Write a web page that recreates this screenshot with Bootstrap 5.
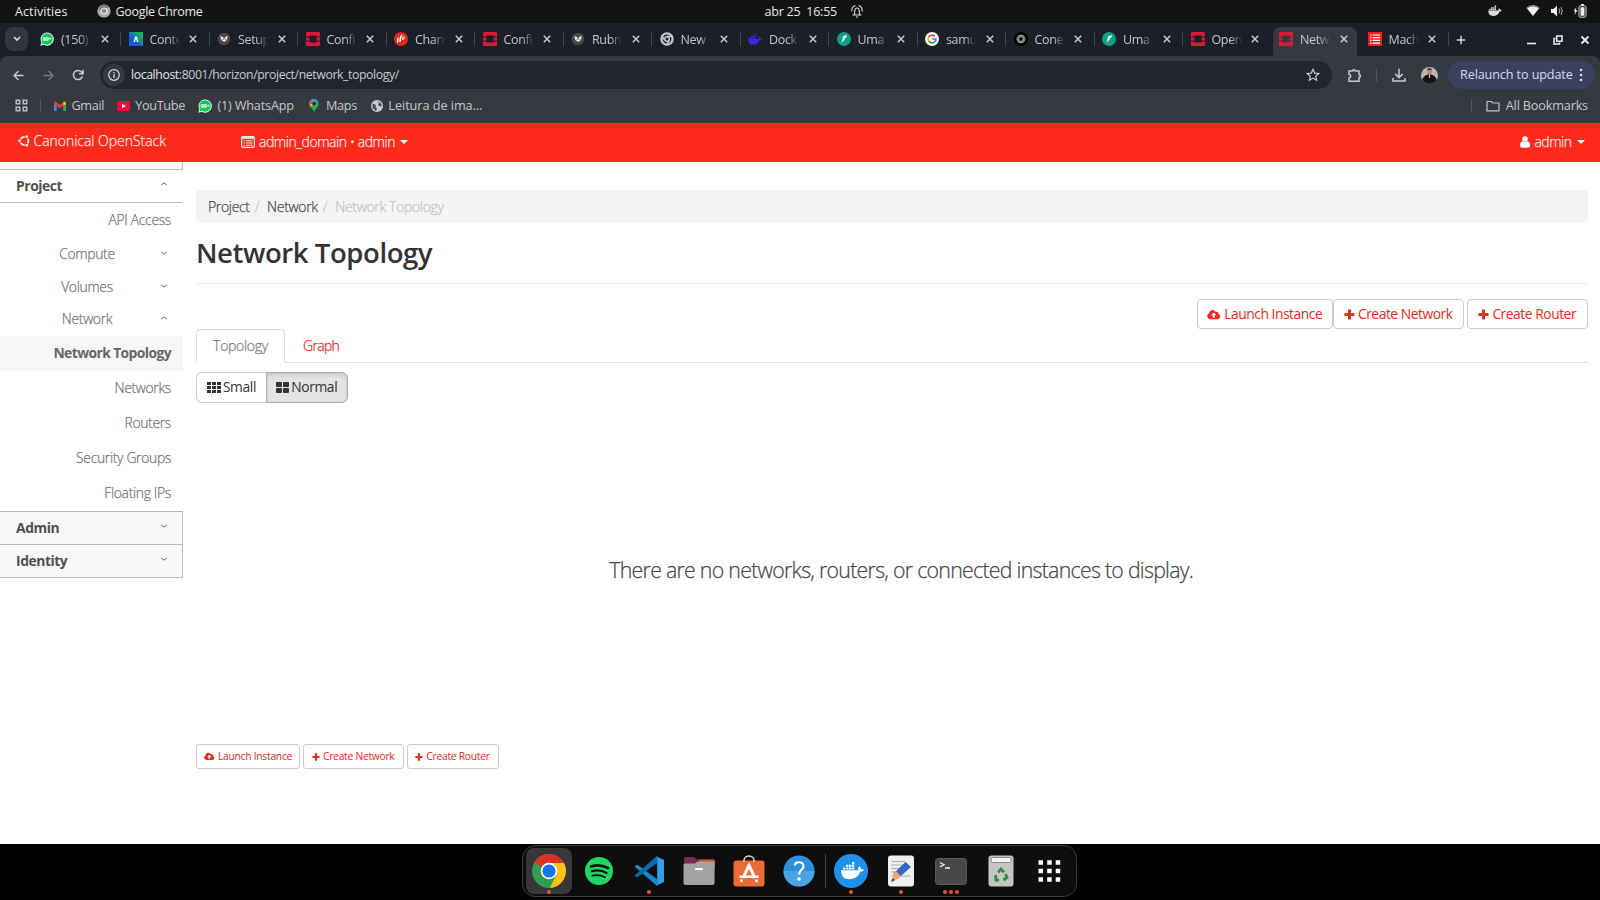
<!DOCTYPE html>
<html lang="en">
<head>
<meta charset="utf-8">
<title>Network Topology - Canonical OpenStack</title>
<link href="https://cdn.jsdelivr.net/npm/bootstrap@5.3.0/dist/css/bootstrap.min.css" rel="stylesheet">
<style>
body{width:1600px;height:900px;overflow:hidden;background:#fff;font-family:"Open Sans","Noto Sans",sans-serif;font-size:13px;line-height:1.2;color:#333}
svg{display:block;flex:none}
/* desktop top bar */
.topbar{height:23px;background:#131313;color:#e6e6e6;font-size:12.5px;letter-spacing:-.25px;padding-bottom:1px}
.topbar>div{flex:1 1 0}
/* browser */
.tabstrip{height:33px;background:#1b1f27;padding-left:5px;color:#c3c6cf}
.tabsearch{width:23px;height:24px;margin-top:4px;border-radius:8px;background:#33363e;margin-right:3.5px;flex:none}
.btab{width:88.5px;flex:none;height:29px;margin-top:4px;padding:0 10.5px 5px 8.5px;position:relative;font-size:12.5px;letter-spacing:-.35px}
.btab .lbl{width:35px;margin-left:7px;white-space:nowrap;-webkit-mask-image:linear-gradient(90deg,#000 52%,transparent 86%);mask-image:linear-gradient(90deg,#000 52%,transparent 86%)}
.btab:not(.on):not(.pre)::after{content:"";position:absolute;right:-1px;top:5px;width:1px;height:14px;background:#42454e}
.btab.on{z-index:1}
.btab.on::before{content:"";position:absolute;z-index:-1;left:2px;right:2px;top:0;bottom:0;background:#373941;border-radius:8px 8px 0 0}
.toolbar{height:38px;background:#373941;color:#c7c9d1;padding-top:5px;border-radius:8px 8px 0 0}
.behind{background:#1b1f27}
.omni{width:1232px;height:28px;border-radius:14px;background:#22252d;margin-left:16px;padding-left:3px;padding-right:12px;font-size:12.3px;letter-spacing:-.41px}
.info{width:22px;height:22px;border-radius:50%;background:#373941;margin-right:6px}
.relaunch{width:147px;height:28px;border-radius:14px;background:#3a4260;color:#d6daf0;font-size:12.6px;padding-left:12px;padding-right:12px;letter-spacing:-.1px}
.bookmarks{height:29px;background:#373941;color:#c3c5cb;font-size:12.7px;padding:0 12px 6px 15px;letter-spacing:-.18px}
.vline{width:1px;height:13px;background:#55575f}
/* horizon: the light face is thickened a little */
.hz-top,.leaf:not(.cur),.grp,.crumbs,.ptabs,.empty-msg{-webkit-text-stroke:.25px currentColor}
.hz-top{height:38.5px;background:#fe2a1b;color:#ffe4e1;font-weight:300;font-size:14px;letter-spacing:-.03px}
.caret{width:0;height:0;border:4px solid transparent;border-top-color:#fff;border-bottom:0}
.side{width:183px;font-size:13.9px;color:#777;font-weight:300;letter-spacing:-.32px}
.side .panelrow{height:33.3px;background:#f8f8f8;border-bottom:1px solid #b9b9b9;border-right:1px solid #b9b9b9;padding:0 14px 0 16px;font-weight:700;color:#505050;letter-spacing:-.45px}
.side .panelrow.open{background:#fff;border-right-color:#fff;padding-top:1px}
.side .stub{height:8px;background:#f8f8f8;border-bottom:1px solid #b9b9b9;border-right:1px solid #b9b9b9}
.side .leaf{height:35px;padding-right:12px;padding-top:1px}
.side .leaf.cur{background:#f6f6f6;font-weight:700;color:#666;letter-spacing:-.6px}
.side .grp{padding:0 15px 0 14px}
.side .grp span{flex:1;text-align:center}
.main{padding:28.5px 12.5px 0 13px}
.crumbs{height:33px;background:#f4f4f4;border-radius:4px;padding-left:12px;padding-top:1px;font-size:14px;font-weight:300;letter-spacing:-.34px;color:#c4c4c4}
.title{font-size:27.5px;font-weight:600;color:#333;letter-spacing:-.42px;height:61px;padding-bottom:2px;border-bottom:1px solid #ececec;margin:0}
.hb{height:30px;border:1px solid #ccc;border-radius:4px;background:#fff;color:#ec2a20;font-size:13.8px;padding:0;display:flex;align-items:center;justify-content:center;gap:3px;letter-spacing:-.45px;line-height:1}
.sb{height:25px;font-size:10.3px;border-radius:3px;letter-spacing:-.27px}
.ptabs{height:34px;border-bottom:1px solid #ddd;font-weight:300;font-size:14px;letter-spacing:-.3px}
.ptabs .one{width:89px;height:34px;border:1px solid #ddd;border-bottom-color:#fff;border-radius:4px 4px 0 0;background:#fff;color:#808080;padding-top:1px}
.tog{height:30.5px;border:1px solid #ccc;color:#333;font-size:13.8px;gap:2px;letter-spacing:-.35px}
.empty-msg{font-size:21.3px;font-weight:300;color:#484848;letter-spacing:-.72px;height:341.5px;padding-bottom:6px;padding-left:19px}
/* dock */
.dockbar{height:56px;background:#000}
.dock{width:555px;height:52px;margin-top:1px;margin-right:1px;border:1px solid #3a3a3a;border-radius:13px;background:#0e0e0e;padding-left:3px}
.di{width:50px;height:50px;position:relative;flex:none}
.di.act::before{content:"";position:absolute;left:0;top:2px;width:46px;height:46px;border-radius:8px;background:#373737}
.di svg{position:relative}
.dots{position:absolute;left:0;width:46px;top:44px;display:flex;justify-content:center;gap:2px}
.dots i{width:4px;height:4px;border-radius:50%;background:#e0592a}
.dsep{width:1px;height:34px;background:#444;margin-left:-1px;margin-right:2px;flex:none}
</style>
</head>
<body class="d-flex flex-column">
<svg width="0" height="0" class="position-absolute">
<defs>
<symbol id="x" viewBox="0 0 10 10"><path d="M1.8 1.8l6.4 6.4M8.2 1.8L1.8 8.2" stroke="#c8cad0" stroke-width="1.5" fill="none"/></symbol>
<symbol id="wa" viewBox="0 0 14 14"><path d="M.3 13.7l1-3.7A6.6 6.6 0 1 1 4 12.8z" fill="#e9fff1"/><path d="M1.4 12.6l.8-2.8a5.7 5.7 0 1 1 2 2z" fill="#12c755"/><text x="7" y="9.3" font-size="5.8" font-weight="700" fill="#fff" text-anchor="middle" letter-spacing="-.3">99+</text></symbol>
<symbol id="os" viewBox="0 0 14 14"><path fill="#e1173a" fill-rule="evenodd" d="M1 0h12a1 1 0 0 1 1 1v3.6h-3.4V3.5H3.4v1.1H0V1a1 1 0 0 1 1-1zM0 5.4h3.4v3.2H0zM10.6 5.4H14v3.2h-3.4zM0 9.4h3.4v1.1h7.2V9.4H14V13a1 1 0 0 1-1 1H1a1 1 0 0 1-1-1z"/></symbol>
<symbol id="juju" viewBox="0 0 14 14"><circle cx="7" cy="7" r="6.3" fill="#4a4744"/><path d="M3.2 4l3 1.200.9 2.800 1-3 2.700-1-1 4-2.500 2-2.900-2z" fill="#eee"/><path d="M5.500 7.500h1M8.200 7.200h1" stroke="#444" stroke-width=".8"/></symbol>
<symbol id="um" viewBox="0 0 14 14"><circle cx="7" cy="7" r="7" fill="#109e86"/><path d="M9.9 3L6.2 4.200 4.400 11 6.500 8.600 8.600 7.500H7.200l.4-1.400 1.700-.7z" fill="#fff"/></symbol>
<symbol id="whale" viewBox="0 0 16 14"><path d="M0 6.5h12c-.2-1.2.1-2.1.8-2.8.8.5 1.100 1.200 1.100 2 .7-.1 1.400 0 2 .4-.5 1-1.400 1.500-2.600 1.500C12.200 11 9.500 12.800 6 12.800 2 12.800 0 10.500 0 6.500z"/><path d="M1.300 4.500h1.700v1.500H1.300zM3.400 4.500h1.700v1.500H3.400zM5.500 4.500h1.700v1.500H5.500zM7.600 4.500h1.700v1.500H7.600zM3.400 2.600h1.700v1.500H3.400zM5.500 2.600h1.700v1.500H5.500zM7.600 2.600h1.700v1.500H7.600zM7.600.7h1.700v1.500H7.600z"/></symbol>
<symbol id="cg" viewBox="0 0 14 14"><circle cx="7" cy="7" r="5.600" fill="none" stroke="currentColor" stroke-width="2.300"/><circle cx="7" cy="7" r="2.300" fill="none" stroke="currentColor" stroke-width="1.500"/><path d="M7 4.200h6M4.600 8.400L1.600 3.400M9.400 8.400l-3 5" stroke="currentColor" stroke-width="1.600"/></symbol>
<symbol id="plus" viewBox="0 0 11 11"><path d="M4 .5h3V4h3.500v3H7v3.500H4V7H.5V4H4z" fill="currentColor"/></symbol>
<symbol id="cloud" viewBox="0 0 15 11"><path fill="currentColor" fill-rule="evenodd" d="M3.300 10.500A3.200 3.200 0 0 1 2 4.500 4 4 0 0 1 9.500 2.800a2.200 2.200 0 0 1 3 2.200 2.900 2.900 0 0 1-.8 5.500zM7.200 3.400L4.300 6.400h1.900v2.600h2V6.400h1.900z"/></symbol>
<symbol id="dn" viewBox="0 0 8 8"><path d="M1.200 3l2.800 2.200L6.800 3" fill="none" stroke="#666" stroke-width="1"/></symbol>
<symbol id="up" viewBox="0 0 8 8"><path d="M1.200 5L4 2.800 6.800 5" fill="none" stroke="#666" stroke-width="1"/></symbol>
</defs>
</svg>

<div class="topbar d-flex align-items-center">
  <div class="d-flex align-items-center" style="padding-left:15px"><span style="letter-spacing:.1px">Activities</span>
    <svg width="14" height="14" viewBox="0 0 14 14" style="margin-left:29px;margin-right:5px"><circle cx="7" cy="7" r="6.600" fill="#aaa"/><path d="M7 .4a6.600 6.600 0 0 1 6 3.600H7L4 8 1.200 4A6.600 6.600 0 0 1 7 .4z" fill="#777"/><circle cx="7" cy="7" r="3" fill="#888" stroke="#eee" stroke-width="1.200"/></svg><span style="letter-spacing:-.32px">Google Chrome</span></div>
  <div class="d-flex align-items-center justify-content-center" style="padding-left:27px"><span>abr 25&nbsp; 16:55</span>
    <svg width="14" height="15" style="margin-left:13.500px" viewBox="0 0 14 15" fill="none" stroke="#ddd" stroke-width="1.100"><path d="M4 11c.8-1 .8-2 .8-4 0-4 4.400-4 4.400 0 0 2 0 3 .8 4zM2.500 11h9M1.800 7.500C1.500 4 3.500 2 5.500 1.500M12.200 7.500C12.500 4 10.500 2 8.500 1.500M6 13h2"/></svg></div>
  <div class="d-flex align-items-center justify-content-end" style="padding-right:13px">
    <svg width="14" height="12" viewBox="0 0 16 14" fill="#ddd"><use href="#whale"/></svg>
    <svg style="margin-left:24px" width="14" height="12" viewBox="0 0 14 12"><path d="M1 3.500a9 9 0 0 1 12 0L7 11z" fill="#eee"/><path d="M.5 3A10 10 0 0 1 13.500 3" stroke="#aaa" fill="none"/></svg>
    <svg style="margin-left:10px" width="14" height="12" viewBox="0 0 14 12"><path d="M1 4h2.500L7 .5v11L3.500 8H1z" fill="#eee"/><path d="M9 3.500q1.500 2.500 0 5M11 2q2.500 4 0 8" stroke="#aaa" fill="none"/></svg>
    <svg style="margin-left:9px" width="14" height="14" viewBox="0 0 14 14"><path d="M3.500 3L.5 7.300h1.800L1.500 11l3-4.700H2.800z" fill="#eee"/><rect x="6" y="1.800" width="7" height="11.400" rx="1.500" fill="none" stroke="#ddd"/><path d="M7.500 3.300h4v8.400h-4zM8 0h3v1.500H8z" fill="#eee"/></svg>
  </div>
</div>

<div class="tabstrip d-flex">
  <div class="tabsearch d-flex align-items-center justify-content-center"><svg width="8" height="6" viewBox="0 0 8 6"><path d="M1 1l3 3 3-3" stroke="#ddd" stroke-width="1.600" fill="none"/></svg></div>
  <div class="btab d-flex align-items-center"><svg width="14" height="14"><use href="#wa"/></svg><span class="lbl">(150)</span><svg class="ms-auto" width="10" height="10"><use href="#x"/></svg></div>
  <div class="btab d-flex align-items-center"><svg width="14" height="14" viewBox="0 0 14 14"><defs><linearGradient id="gc" x1="0" y1="1" x2="1" y2="0"><stop offset=".35" stop-color="#1559d8"/><stop offset=".8" stop-color="#17b25c"/></linearGradient></defs><path fill="url(#gc)" d="M0 0h14v14H0z"/><path d="M4.500 10L6.300 4.500h1.600L9.600 10H8L7 6.500 6 10z" fill="#fff"/></svg><span class="lbl">Conte</span><svg class="ms-auto" width="10" height="10"><use href="#x"/></svg></div>
  <div class="btab d-flex align-items-center"><svg width="14" height="14"><use href="#juju"/></svg><span class="lbl">Setup</span><svg class="ms-auto" width="10" height="10"><use href="#x"/></svg></div>
  <div class="btab d-flex align-items-center"><svg width="14" height="14"><use href="#os"/></svg><span class="lbl">Confi</span><svg class="ms-auto" width="10" height="10"><use href="#x"/></svg></div>
  <div class="btab d-flex align-items-center"><svg width="14" height="14" viewBox="0 0 14 14"><circle cx="7" cy="7" r="7" fill="#e8261c"/><path d="M3.500 11V6.500q1.500-2 1.500 0V9q1.500 1.500 1.500 0V4q1.300-2 1.500 0v3q1.500 1.200 2 0V4" stroke="#fff" fill="none" stroke-width="1"/></svg><span class="lbl">Charr</span><svg class="ms-auto" width="10" height="10"><use href="#x"/></svg></div>
  <div class="btab d-flex align-items-center"><svg width="14" height="14"><use href="#os"/></svg><span class="lbl">Confi</span><svg class="ms-auto" width="10" height="10"><use href="#x"/></svg></div>
  <div class="btab d-flex align-items-center"><svg width="14" height="14"><use href="#juju"/></svg><span class="lbl">Rubri</span><svg class="ms-auto" width="10" height="10"><use href="#x"/></svg></div>
  <div class="btab d-flex align-items-center"><svg width="14" height="14"><use href="#cg"/></svg><span class="lbl">New</span><svg class="ms-auto" width="10" height="10"><use href="#x"/></svg></div>
  <div class="btab d-flex align-items-center"><svg width="14" height="13" fill="#3a25e6"><use href="#whale"/></svg><span class="lbl">Dock</span><svg class="ms-auto" width="10" height="10"><use href="#x"/></svg></div>
  <div class="btab d-flex align-items-center"><svg width="14" height="14"><use href="#um"/></svg><span class="lbl">Uma</span><svg class="ms-auto" width="10" height="10"><use href="#x"/></svg></div>
  <div class="btab d-flex align-items-center"><svg width="14" height="14" viewBox="0 0 14 14"><circle cx="7" cy="7" r="7" fill="#fff"/><g fill="none" stroke-width="1.700"><path d="M9.700 4.300A3.900 3.900 0 0 0 3.700 5" stroke="#e94335"/><path d="M3.700 5a3.900 3.900 0 0 0 0 4" stroke="#fabb05"/><path d="M3.700 9a3.900 3.900 0 0 0 6 .8" stroke="#34a853"/><path d="M9.700 9.800A3.900 3.900 0 0 0 10.900 7H7" stroke="#4285f4"/></g></svg><span class="lbl">samu</span><svg class="ms-auto" width="10" height="10"><use href="#x"/></svg></div>
  <div class="btab d-flex align-items-center"><svg width="14" height="14" viewBox="0 0 14 14"><circle cx="7" cy="7" r="7" fill="#000"/><g fill="none" stroke="#bbb" stroke-width=".8"><ellipse cx="7" cy="7" rx="4.200" ry="2.300"/><ellipse cx="7" cy="7" rx="4.200" ry="2.300" transform="rotate(60 7 7)"/><ellipse cx="7" cy="7" rx="4.200" ry="2.300" transform="rotate(120 7 7)"/></g></svg><span class="lbl">Cone</span><svg class="ms-auto" width="10" height="10"><use href="#x"/></svg></div>
  <div class="btab d-flex align-items-center"><svg width="14" height="14"><use href="#um"/></svg><span class="lbl">Uma</span><svg class="ms-auto" width="10" height="10"><use href="#x"/></svg></div>
  <div class="btab pre d-flex align-items-center"><svg width="14" height="14"><use href="#os"/></svg><span class="lbl">Open</span><svg class="ms-auto" width="10" height="10"><use href="#x"/></svg></div>
  <div class="btab on d-flex align-items-center"><svg width="14" height="14"><use href="#os"/></svg><span class="lbl">Netw</span><svg class="ms-auto" width="10" height="10"><use href="#x"/></svg></div>
  <div class="btab d-flex align-items-center"><svg width="14" height="14" viewBox="0 0 14 14"><path fill="#e2261d" d="M0 0h14v14H0z"/><path d="M2 3h1.500M4.500 3H12M2 5.700h1.500M4.500 5.700H12M2 8.400h1.500M4.500 8.400H12M2 11.100h1.500M4.500 11.100H12" stroke="#fff" stroke-width="1.200"/></svg><span class="lbl">Mach</span><svg class="ms-auto" width="10" height="10"><use href="#x"/></svg></div>
  <div class="d-flex align-items-center flex-grow-1" style="padding:0 10px 0 8.500px">
    <svg width="10" height="10" viewBox="0 0 10 10"><path d="M5 .8v8.400M.8 5h8.400" stroke="#d0d2d8" stroke-width="1.500"/></svg>
    <svg class="ms-auto" width="9" height="10" viewBox="0 0 9 10"><path d="M0 8.500h9" stroke="#eee" stroke-width="1.600"/></svg>
    <svg style="margin-left:17px" width="10" height="10" viewBox="0 0 10 10"><path d="M3.700 1h5.300v5.300H3.700zM2.500 3.500H1V9h5.500V7.500" fill="none" stroke="#eee" stroke-width="1.500"/></svg>
    <svg style="margin-left:17px" width="10" height="10" viewBox="0 0 10 10"><path d="M1.500 1.500l7 7M8.500 1.500l-7 7" stroke="#eee" stroke-width="1.800"/></svg>
  </div>
</div>

<div class="behind"><div class="toolbar d-flex">
  <div class="d-flex align-items-center" style="height:28px;padding-left:13px">
    <svg width="11" height="11" viewBox="0 0 11 11" fill="none" stroke="#c7c9d1" stroke-width="1.400"><path d="M10.500 5.500H1M5.500 1L1 5.500 5.500 10"/></svg>
    <svg style="margin-left:19px" width="11" height="11" viewBox="0 0 11 11" fill="none" stroke="#777a82" stroke-width="1.400"><path d="M.5 5.500H10M5.500 1L10 5.500 5.500 10"/></svg>
    <svg style="margin-left:18px" width="12" height="12" viewBox="0 0 12 12" fill="none" stroke="#c7c9d1" stroke-width="1.500"><path d="M10.400 7.300A4.600 4.600 0 1 1 9.500 3L11 4.500"/><path d="M11 .8v3.900H7"/></svg>
  </div>
  <div class="omni d-flex align-items-center"><span class="info d-flex align-items-center justify-content-center"><svg width="12" height="12" viewBox="0 0 12 12"><circle cx="6" cy="6" r="5.300" fill="none" stroke="#d5d7dd" stroke-width="1.200"/><path d="M6 5.300V9M6 3v1.300" stroke="#d5d7dd" stroke-width="1.300"/></svg></span><span><span style="color:#e3e4e8">localhost</span>:8001/horizon/project/network_topology/</span>
    <svg class="ms-auto" width="14" height="14" viewBox="0 0 14 14"><path d="M7 1.300l1.700 3.800 4.100.4-3.100 2.700.9 4L7 10.100l-3.600 2.100.9-4L1.200 5.500l4.100-.4z" fill="none" stroke="#c7c9d1" stroke-width="1.200"/></svg></div>
  <div class="d-flex align-items-center flex-grow-1" style="height:28px;padding-left:15px;padding-right:5px">
    <svg width="15" height="15" viewBox="0 0 15 15"><path d="M2 3h3.700a1.300 1.300 0 0 1 2.600 0h3.700v3.600a1.400 1.400 0 0 1 0 2.800V13.300H2V10a1.700 1.700 0 0 0 0-3.400z" fill="none" stroke="#c7c9d1" stroke-width="1.500"/></svg>
    <span class="vline" style="margin-left:14px"></span>
    <svg style="margin-left:15px" width="14" height="14" viewBox="0 0 14 14"><path d="M7 .5v9M3.300 6L7 9.600 10.700 6M1 10v3h12v-3" fill="none" stroke="#c7c9d1" stroke-width="1.500"/></svg>
    <svg style="margin-left:15px" width="17" height="17" viewBox="0 0 17 17"><defs><clipPath id="av"><circle cx="8.500" cy="8.500" r="8.500"/></clipPath></defs><g clip-path="url(#av)"><path fill="#bdb3b1" d="M0 0h17v17H0z"/><path d="M1 14C2 9 5 7.500 8.500 7.500S15 9 16 14l-3 3H4z" fill="#151312"/><ellipse cx="8.500" cy="4.800" rx="2.200" ry="3" fill="#b98876"/><path d="M6 3.500c0-3.500 5-3.500 5 0l-1-.7H7z" fill="#2b2020"/><path d="M8 8h1v3H8z" fill="#ddd"/></g></svg>
    <div class="relaunch d-flex align-items-center justify-content-between ms-auto"><span>Relaunch to update</span><svg width="4" height="14" viewBox="0 0 4 14" fill="#d6daf0"><circle cx="2" cy="2" r="1.300"/><circle cx="2" cy="7" r="1.300"/><circle cx="2" cy="12" r="1.300"/></svg></div>
  </div>
</div></div>
<div class="bookmarks d-flex align-items-center">
  <svg width="13" height="13" viewBox="0 0 13 13" fill="none" stroke="#b9bbc1" stroke-width="1.500"><path d="M1.200 1.200h3.500v3.500H1.200zM8.200 1.200h3.500v3.500H8.200zM1.200 8.200h3.500v3.500H1.200zM8.200 8.200h3.500v3.500H8.200z"/></svg>
  <span class="vline" style="margin-left:12px;margin-right:13px"></span>
  <svg width="12" height="10" viewBox="0 0 12 10"><path d="M0 1.500V10h2.700V4.500z" fill="#4285f4"/><path d="M12 1.500V10H9.300V4.500z" fill="#34a853"/><path d="M0 1.500Q1 0 2.500 1L6 4 9.300 1v3.600L6 7.200 0 3z" fill="#e53935"/><path d="M9.300 1Q11 0 12 1.500V3L9.300 5z" fill="#fbbc04"/></svg><span style="margin-left:5.500px;letter-spacing:-.35px">Gmail</span>
  <svg style="margin-left:12.500px" width="13" height="10" viewBox="0 0 13 10"><rect width="13" height="10" rx="2.500" fill="#f5093a"/><path d="M5 2.800v4.400L9 5z" fill="#fff"/></svg><span style="margin-left:5.500px;letter-spacing:-.35px">YouTube</span>
  <svg style="margin-left:13.500px" width="14" height="14"><use href="#wa"/></svg><span style="margin-left:5px">(1) WhatsApp</span>
  <svg style="margin-left:15px" width="10" height="13" viewBox="0 0 10 13"><path d="M5 0a4.700 4.700 0 0 1 4.700 4.700C9.700 8 6.500 9 5 13 3.500 9 .3 8 .3 4.700A4.700 4.700 0 0 1 5 0z" fill="#34a853"/><path d="M.3 4.700A4.700 4.700 0 0 1 5 0v4.700L1.500 8z" fill="#fbbc04"/><path d="M1.300 2A4.700 4.700 0 0 1 8.500 1.500L5 5z" fill="#4285f4"/><path d="M1.300 2l2.700 2-3.500 2z" fill="#ea4335"/><circle cx="5" cy="4.600" r="1.700" fill="#222"/></svg><span style="margin-left:7px;letter-spacing:-.35px">Maps</span>
  <svg style="margin-left:14px" width="12" height="12" viewBox="0 0 12 12"><circle cx="6" cy="6" r="6" fill="#c9cbd0"/><path d="M1.500 3.500L5 5l-.5 2 1.500 1.500L5 11 1.500 8zM6 1.500l2 1.500-1 2 3.500 2V4.500L9 2.500z" fill="#484a52"/></svg><span style="margin-left:5.500px;letter-spacing:-.05px">Leitura de ima…</span>
  <span class="vline ms-auto" style="margin-right:14px"></span>
  <svg width="14" height="12" viewBox="0 0 14 12"><path d="M1 1.500h4.300L6.800 3H13v7.800H1z" fill="none" stroke="#c3c5cb" stroke-width="1.200"/></svg><span style="margin-left:6px">All Bookmarks</span>
</div>

<div class="hz-top d-flex align-items-center">
  <div class="d-flex align-items-center" style="width:241px;padding:0 0 2px 18px"><svg width="12" height="12" viewBox="0 0 12 12"><circle cx="6.300" cy="6" r="4" fill="none" stroke="#ffe4e1" stroke-width="1.900"/><circle cx="1.700" cy="6" r="2.100" fill="#fe2a1b"/><circle cx="8.600" cy="2" r="2.100" fill="#fe2a1b"/><circle cx="8.600" cy="10" r="2.100" fill="#fe2a1b"/><circle cx="1.500" cy="6" r="1.400" fill="#ffe4e1"/><circle cx="8.800" cy="1.700" r="1.400" fill="#ffe4e1"/><circle cx="8.800" cy="10.300" r="1.400" fill="#ffe4e1"/></svg><span style="margin-left:3.500px">Canonical OpenStack</span></div>
  <svg width="14" height="12" viewBox="0 0 14 12"><rect x=".6" y=".6" width="12.800" height="10.800" rx="1.300" fill="none" stroke="#ffe4e1" stroke-width="1.200"/><path d="M1 1.800h12" stroke="#ffe4e1" stroke-width="2"/><path d="M2.500 4.800H4M5 4.800h6.500M2.500 7H4M5 7h6.500M2.500 9.200H4M5 9.200h6.500" stroke="#ffe4e1" stroke-width="1.100"/></svg><span style="margin-left:4px;padding-top:1px;letter-spacing:-.46px">admin_domain • admin</span><span class="caret" style="margin-left:5px"></span>
  <svg class="ms-auto" width="10" height="12" viewBox="0 0 10 12" fill="#fff"><circle cx="5" cy="3" r="2.800"/><path d="M0 9.500C0 6.500 1.500 5.300 2.500 5.300q2.500 1.600 5 0C8.500 5.300 10 6.500 10 9.500q0 2.300-2 2.300H2q-2 0-2-2.300z"/></svg><span style="margin-left:4px;padding-top:1px;letter-spacing:-.5px">admin</span><span class="caret" style="margin:0 15.500px 0 5px"></span>
</div>

<div class="d-flex" style="height:682.500px">
  <nav class="side flex-shrink-0">
    <div class="stub"></div>
    <div class="panelrow open d-flex align-items-center justify-content-between">Project<svg class="mb-1" width="8" height="8"><use href="#up"/></svg></div>
    <div class="leaf d-flex align-items-center justify-content-end">API Access</div>
    <div class="grp d-flex align-items-center" style="height:34px"><span>Compute</span><svg class="mb-1" width="8" height="8"><use href="#dn"/></svg></div>
    <div class="grp d-flex align-items-center" style="height:32px"><span>Volumes</span><svg class="mb-1" width="8" height="8"><use href="#dn"/></svg></div>
    <div class="grp d-flex align-items-center" style="height:32px"><span>Network</span><svg class="mb-1" width="8" height="8"><use href="#up"/></svg></div>
    <div class="leaf cur d-flex align-items-center justify-content-end">Network Topology</div>
    <div class="leaf d-flex align-items-center justify-content-end">Networks</div>
    <div class="leaf d-flex align-items-center justify-content-end">Routers</div>
    <div class="leaf d-flex align-items-center justify-content-end">Security Groups</div>
    <div class="leaf d-flex align-items-center justify-content-end" style="height:36px;border-bottom:1px solid #b9b9b9">Floating IPs</div>
    <div class="panelrow d-flex align-items-center justify-content-between">Admin<svg class="mb-1" width="8" height="8"><use href="#dn"/></svg></div>
    <div class="panelrow d-flex align-items-center justify-content-between">Identity<svg class="mb-1" width="8" height="8"><use href="#dn"/></svg></div>
  </nav>
  <main class="main flex-grow-1 d-flex flex-column">
    <div class="crumbs d-flex align-items-center"><span style="color:#4a4a4a">Project</span><span style="margin:0 8px 0 5px">/</span><span style="color:#4a4a4a">Network</span><span style="margin:0 8px 0 5px">/</span><span>Network Topology</span></div>
    <h1 class="title d-flex align-items-center">Network Topology</h1>
    <div class="d-flex justify-content-end" style="margin-top:15px">
      <button class="hb" style="width:135.500px"><svg width="14" height="11"><use href="#cloud"/></svg>Launch Instance</button>
      <button class="hb" style="width:131.500px"><svg width="11" height="11"><use href="#plus"/></svg>Create Network</button>
      <button class="hb" style="width:120.500px;margin-left:3px"><svg width="11" height="11"><use href="#plus"/></svg>Create Router</button>
    </div>
    <div class="ptabs d-flex align-items-center"><div class="one d-flex align-items-center justify-content-center">Topology</div><span style="color:#ec2a20;margin-left:18px;padding-top:1px;letter-spacing:-.7px">Graph</span></div>
    <div class="d-flex" style="margin-top:9px">
      <div class="tog d-flex align-items-center justify-content-center rounded-start" style="width:70px;border-right:0"><svg width="14" height="11" viewBox="0 0 14 11" fill="#333"><path d="M0 0h4v3H0zM5 0h4v3H5zM10 0h4v3h-4zM0 4h4v3H0zM5 4h4v3H5zM10 4h4v3h-4zM0 8h4v3H0zM5 8h4v3H5zM10 8h4v3h-4z"/></svg>Small</div>
      <div class="tog d-flex align-items-center justify-content-center rounded-end" style="width:81.500px;background:#e4e4e4;border-color:#adadad;box-shadow:inset 0 2px 4px rgba(0,0,0,.13)"><svg width="13" height="11" viewBox="0 0 13 11" fill="#333"><rect width="6" height="5" rx="1"/><rect x="7" width="6" height="5" rx="1"/><rect y="6" width="6" height="5" rx="1"/><rect x="7" y="6" width="6" height="5" rx="1"/></svg>Normal</div>
    </div>
    <div class="empty-msg d-flex align-items-center justify-content-center">There are no networks, routers, or connected instances to display.</div>
    <div class="d-flex" style="gap:3px">
      <button class="hb sb" style="width:104px"><svg width="11" height="8.500"><use href="#cloud"/></svg>Launch Instance</button>
      <button class="hb sb" style="width:100.500px"><svg width="8" height="8"><use href="#plus"/></svg>Create Network</button>
      <button class="hb sb" style="width:92px"><svg width="8" height="8"><use href="#plus"/></svg>Create Router</button>
    </div>
  </main>
</div>

<div class="dockbar d-flex justify-content-center">
  <div class="dock d-flex align-items-center">
    <div class="di act d-flex align-items-center"><svg width="46" height="34" viewBox="-23 -17 46 34"><circle r="17" fill="#2f9e4f"/><path d="M0 0L-14.700-8.500A17 17 0 0 1 14.700-8.500L15 -6z" fill="#db3226"/><path d="M0-8H15A17 17 0 0 1 1 17L7 4z" fill="#fbc116"/><circle r="8.300" fill="#fff"/><circle r="6.600" fill="#1a73e8"/></svg><div class="dots"><i></i></div></div>
    <div class="di d-flex align-items-center"><svg width="46" height="30" viewBox="-23 -15 46 30"><circle r="14" fill="#1ed760"/><g fill="none" stroke="#0e0e0e" stroke-linecap="round"><path d="M-8-4.500Q1-7.500 9-3" stroke-width="2.700"/><path d="M-7.300.3Q1-2 7.500 2" stroke-width="2.200"/><path d="M-6.500 4.700Q0 3 6 6.200" stroke-width="1.800"/></g></svg></div>
    <div class="di d-flex align-items-center"><svg width="46" height="30" viewBox="-23 -15 46 30"><path d="M-14.500-4.500l2.500-2L8 8v7z" fill="#1787cf"/><path d="M-14.500 4.500l2.500 2L8-8v-7z" fill="#0b69b3"/><path d="M6.500-15L15-11v22L6.500 15q1.700-.8 1.700-3v-24q0-2.200-1.700-3z" fill="#2ba2ee"/></svg><div class="dots"><i></i></div></div>
    <div class="di d-flex align-items-center"><svg width="46" height="30" viewBox="-23 -15 46 30"><path d="M-15-12q0-2 2-2h8l3 2.500H14q2 0 2 2V0h-31z" fill="#7b2d4d"/><path d="M0-11.500h14q2 0 2 2V-5H0z" fill="#d8532a"/><path d="M-15.500-6q0-1.500 1.500-1.500H-4l2.500-2H14q1.500 0 1.500 1.500V12q0 2-2 2h-27q-2 0-2-2z" fill="#a3a3a3"/><rect x="-4" y="-3" width="8" height="2" rx=".6" fill="#fff"/></svg></div>
    <div class="di d-flex align-items-center"><svg width="46" height="34" viewBox="-23 -19 46 34"><rect x="-15.500" y="-12.500" width="31" height="26" rx="3" fill="#ee6a35"/><path d="M-5-11v-1.500a5 4.500 0 0 1 10 0v1.500" fill="none" stroke="#e8d9c5" stroke-width="1.500"/><path d="M-6 5L0-7.500 6 5" fill="none" stroke="#fff" stroke-width="3"/><path d="M-9.500 3.800h19M-7.500 6.500v2.500M7.500 6.500v2.500" fill="none" stroke="#fff" stroke-width="2.600"/></svg></div>
    <div class="di d-flex align-items-center"><svg width="46" height="32" viewBox="-23 -16 46 32"><circle r="15.500" fill="#2f8fd8"/><path d="M-15.500 0a15.500 15.500 0 0 0 31 0z" fill="#4aa3e2"/><path d="M-4.300-5.500C-3.500-10 4.500-10 4.500-4.500 4.500-1 0-1.500 0 3.500" fill="none" stroke="#fff" stroke-width="2.200"/><circle cy="8" r="1.800" fill="#fff"/></svg></div>
    <span class="dsep"></span>
    <div class="di d-flex align-items-center"><svg width="46" height="34" viewBox="-23 -17 46 34"><circle r="17" fill="#2091ea"/><svg x="-11" y="-10" width="25" height="20" viewBox="0 0 16 14" fill="#fff"><use href="#whale" width="16" height="14"/></svg></svg><div class="dots"><i></i></div></div>
    <div class="di d-flex align-items-center"><svg width="46" height="32" viewBox="-23 -16 46 32"><rect x="-13" y="-15.500" width="26" height="31" rx="3" fill="#efefef"/><path d="M-9.500-9.500H4M-9.500-6H4M-9.500-2.500H1M-9.500 1h6M-9.500 5h19" stroke="#aaa"/><path d="M4.500-9l5.500 5L-2.500 7l-5-4.500z" fill="#3465c8"/><path d="M-5 .2L0 5l-2.500 2.500-6.500 3 1.200-7.500z" fill="#f0a875"/><path d="M-8.500 7.500L-6 9l-4 2z" fill="#333"/></svg><div class="dots"><i></i></div></div>
    <div class="di d-flex align-items-center"><svg width="46" height="30" viewBox="-23 -15 46 30"><rect x="-15.500" y="-12.500" width="31" height="26" rx="3" fill="#484848" stroke="#5b5b5b"/><path d="M-11-8.500l4 2.200-4 2.200M-6-3h5" fill="none" stroke="#eee" stroke-width="1.300"/></svg><div class="dots"><i></i><i></i><i></i></div></div>
    <div class="di d-flex align-items-center"><svg width="46" height="32" viewBox="-23 -16 46 32"><rect x="-12.500" y="-15.500" width="25" height="31" rx="3" fill="#c4c6c4"/><rect x="-10" y="-13.500" width="20" height="5" rx="1.500" fill="#f4f4f4" stroke="#888"/><g fill="none" stroke="#2f8f37" stroke-width="2.800"><path d="M-3 1.200L0-2 3 1.200M4.500 3L6 6.500 2.500 9M-2 9.200H-5L-5.500 4"/></g></svg></div>
    <div class="di d-flex align-items-center" style="width:44px"><svg width="43" height="24" viewBox="-21.500 -12 43 24" fill="#fff"><path d="M-11-10.700h4.500v4.500H-11zM-2.300-10.700h4.500v4.500H-2.300zM6.200-10.700h4.500v4.500H6.200zM-11-2.300h4.500v4.500H-11zM-2.300-2.300h4.500v4.500H-2.300zM6.200-2.300h4.500v4.500H6.200zM-11 6.200h4.500v4.500H-11zM-2.300 6.200h4.500v4.500H-2.300zM6.200 6.200h4.500v4.500H6.200z"/></svg></div>
  </div>
</div>
<script src="https://cdn.jsdelivr.net/npm/bootstrap@5.3.0/dist/js/bootstrap.bundle.min.js"></script>
</body>
</html>
